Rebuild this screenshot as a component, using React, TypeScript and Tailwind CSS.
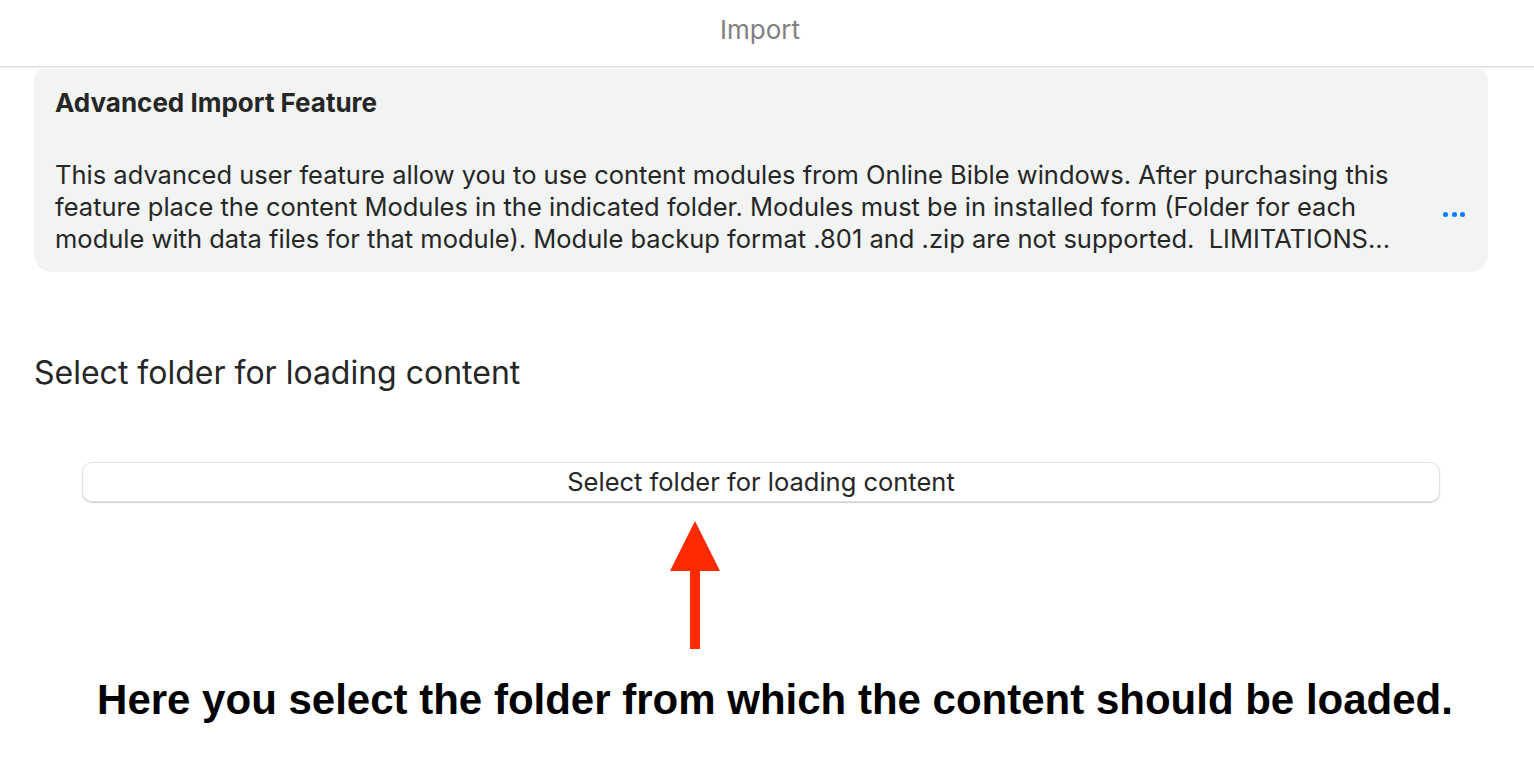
import { useState } from "react";

const ui = { fontFamily: "Inter, 'Noto Sans', sans-serif" };
const arial = { fontFamily: "'Liberation Sans', Arial, sans-serif" };

function RedArrow() {
  return (
    <svg width="50" height="128" viewBox="0 0 50 128" className="block">
      <polygon points="25,0 50,50 0,50" fill="#ff2a00" />
      <rect x="20" y="48" width="10" height="80" fill="#ff2a00" />
    </svg>
  );
}

export default function App() {
  const [expanded, setExpanded] = useState(false);

  return (
    <div className="min-h-screen w-full bg-white text-[#262626]" style={ui}>
      <header className="flex h-[67px] items-center justify-center border-b border-[#dcdcdc] pr-[14px] shadow-[0_1px_2px_rgba(0,0,0,0.08)]">
        <span className="pb-[8px] text-[26px] text-[#808080]">Import</span>
      </header>

      <main className="pl-[34px] pr-[46px]">
        <section className="flex rounded-b-[18px] rounded-t-[14px] bg-[#f2f4f3] pb-[17px] pl-[21px] pr-[23px] pt-[20px]">
          <div className="flex-1">
            <h2 className="text-[26px] font-bold leading-[32px]">Advanced Import Feature</h2>
            <p className="mt-[40px] whitespace-nowrap text-[25.5px] leading-[32px]">
              This advanced user feature allow you to use content modules from Online Bible windows. After purchasing this
              <br />
              feature place the content Modules in the indicated folder. Modules must be in installed form (Folder for each
              <br />
              module with data files for that module). Module backup format .801 and .zip are not supported.&nbsp; LIMITATIONS...
            </p>
          </div>
          <button
            onClick={() => setExpanded(!expanded)}
            className="mb-[38px] flex gap-[3.5px] self-end"
            aria-label="More"
          >
            <span className="h-[5px] w-[5px] rounded-full bg-[#0a7aff]" />
            <span className="h-[5px] w-[5px] rounded-full bg-[#0a7aff]" />
            <span className="h-[5px] w-[5px] rounded-full bg-[#0a7aff]" />
          </button>
        </section>

        <h3 className="mt-[81px] text-[32px] leading-[40px]">Select folder for loading content</h3>

        <div className="mt-[69px] px-[48px]">
          <button className="flex h-[40px] w-full items-center justify-center rounded-[10px] border border-[#e2e2e2] bg-white text-[25.5px] text-[#262626] shadow-[0_1px_1px_rgba(0,0,0,0.2)]">
            Select folder for loading content
          </button>
        </div>

        <div className="mt-[19px] flex justify-center pr-[132px]">
          <RedArrow />
        </div>

        <p className="mt-[27px] pl-[28px] text-center text-[42px] font-bold leading-[48px] text-black" style={arial}>
          Here you select the folder from which the content should be loaded.
        </p>
      </main>
    </div>
  );
}
